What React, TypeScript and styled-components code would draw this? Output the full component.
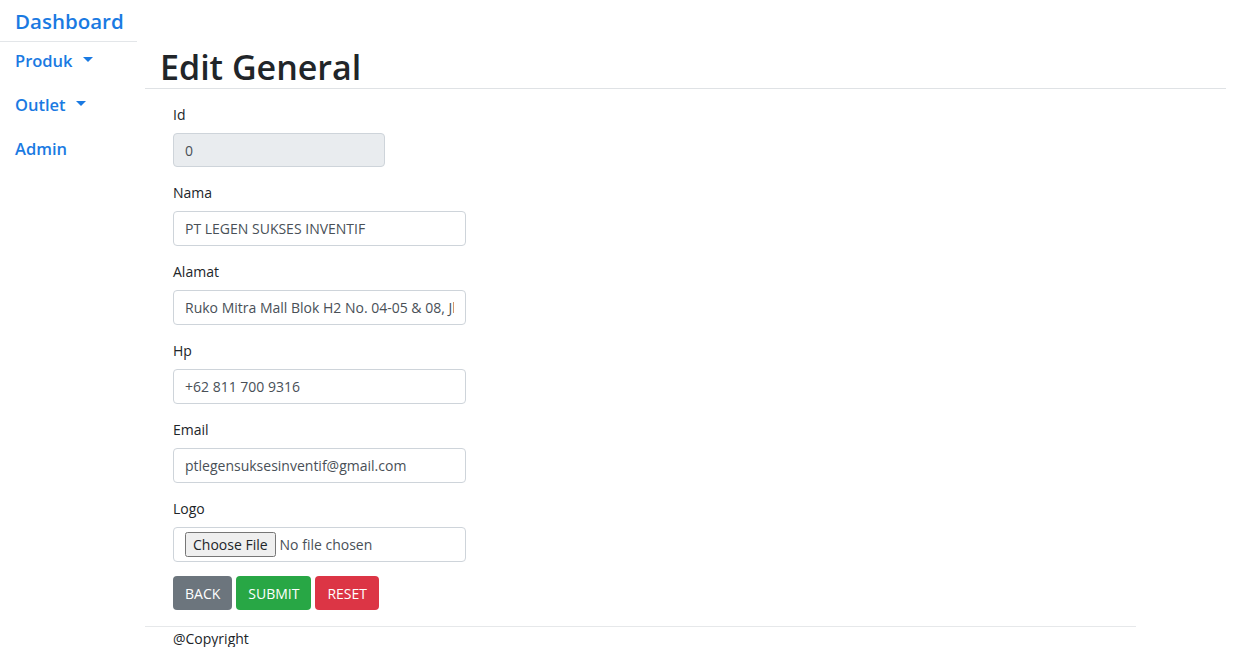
import React from "react";
import styled, { createGlobalStyle } from "styled-components";

const Global = createGlobalStyle`
  html, body { margin: 0; padding: 0; background: #fff; }
  body { font-family: "Open Sans", "Noto Sans", sans-serif; color: #212529; }
  * { box-sizing: border-box; }
`;

const Page = styled.div`
  display: flex;
  align-items: flex-start;
  width: 1234px;
`;

const Sidebar = styled.nav`
  width: 137px;
  flex: none;
  display: flex;
  flex-direction: column;
`;

const Brand = styled.a`
  display: block;
  height: 42px;
  padding: 7px 0 0 15px;
  font-size: 20.5px;
  font-weight: 600;
  color: #1a7ae2;
  text-decoration: none;
  border-bottom: 1px solid #e3e6e9;
`;

const NavItem = styled.a`
  display: flex;
  align-items: center;
  height: 44px;
  padding: 0 15px 8px;
  font-size: 16.5px;
  font-weight: 600;
  color: #1a7ae2;
  text-decoration: none;
`;

const Caret = styled.span`
  display: inline-block;
  margin-left: 10px;
  width: 0;
  height: 0;
  border-left: 5px solid transparent;
  border-right: 5px solid transparent;
  border-top: 5px solid #1a7ae2;
  margin-top: -2px;
`;

const Main = styled.main`
  flex: 1;
  margin: 0 8px;
  display: flex;
  flex-direction: column;
`;

const Title = styled.h1`
  margin: 0;
  height: 89px;
  padding: 45px 0 0 15px;
  font-size: 34px;
  line-height: 44px;
  font-weight: 600;
  color: #212529;
  border-bottom: 1px solid #dfe2e5;
`;

const Form = styled.form`
  display: flex;
  flex-direction: column;
  padding: 15px 0 0 28px;
`;

const Group = styled.div`
  display: flex;
  flex-direction: column;
  margin-bottom: 15px;
`;

const Label = styled.label`
  font-size: 14px;
  line-height: 21px;
  margin-bottom: 8px;
  color: #212529;
`;

const Input = styled.input<{ $w?: number; $h?: number }>`
  width: ${(p) => p.$w ?? 293}px;
  height: ${(p) => p.$h ?? 35}px;
  padding: 0 11px;
  font-family: inherit;
  font-size: 14px;
  color: #495057;
  background: #fff;
  border: 1px solid #ced4da;
  border-radius: 4px;
  outline: none;
  &:disabled {
    background: #e9ecef;
    color: #495057;
  }
`;

const FileBox = styled.div`
  width: 293px;
  height: 35px;
  padding: 0 11px;
  display: flex;
  align-items: center;
  border: 1px solid #ced4da;
  border-radius: 4px;
  input {
    font-family: inherit;
    font-size: 14px;
    color: #495057;
  }
  input::file-selector-button {
    font-family: inherit;
    font-size: 14px;
    color: #212529;
    height: 25px;
    padding: 0 6px;
    margin-right: 4px;
  }
`;

const Actions = styled.div`
  display: flex;
  gap: 4px;
  margin-top: -1px;
`;

const Btn = styled.button<{ $bg: string }>`
  height: 34px;
  padding: 0 12px;
  font-family: inherit;
  font-size: 14px;
  color: #fff;
  background: ${(p) => p.$bg};
  border: none;
  border-radius: 4px;
  text-transform: uppercase;
`;

const Footer = styled.footer`
  margin-top: 16px;
  margin-right: 90px;
  border-top: 1px solid #e6e8ea;
  padding: 1px 0 0 28px;
  font-size: 14px;
  line-height: 21px;
  color: #212529;
`;

export default function App() {
  return (
    <>
      <Global />
      <Page>
        <Sidebar>
          <Brand href="#">Dashboard</Brand>
          <NavItem href="#">Produk<Caret /></NavItem>
          <NavItem href="#">Outlet<Caret /></NavItem>
          <NavItem href="#">Admin</NavItem>
        </Sidebar>
        <Main>
          <Title>Edit General</Title>
          <Form>
            <Group>
              <Label>Id</Label>
              <Input $w={212} $h={34} value="0" disabled readOnly />
            </Group>
            <Group>
              <Label>Nama</Label>
              <Input value="PT LEGEN SUKSES INVENTIF" readOnly />
            </Group>
            <Group>
              <Label>Alamat</Label>
              <Input value="Ruko Mitra Mall Blok H2 No. 04-05 & 08, Jl. Raya" readOnly />
            </Group>
            <Group>
              <Label>Hp</Label>
              <Input value="+62 811 700 9316" readOnly />
            </Group>
            <Group>
              <Label>Email</Label>
              <Input value="ptlegensuksesinventif@gmail.com" readOnly />
            </Group>
            <Group>
              <Label>Logo</Label>
              <FileBox>
                <input type="file" />
              </FileBox>
            </Group>
            <Actions>
              <Btn type="button" $bg="#6c757d">Back</Btn>
              <Btn type="button" $bg="#28a745">Submit</Btn>
              <Btn type="button" $bg="#dc3545">Reset</Btn>
            </Actions>
          </Form>
          <Footer>@Copyright</Footer>
        </Main>
      </Page>
    </>
  );
}
